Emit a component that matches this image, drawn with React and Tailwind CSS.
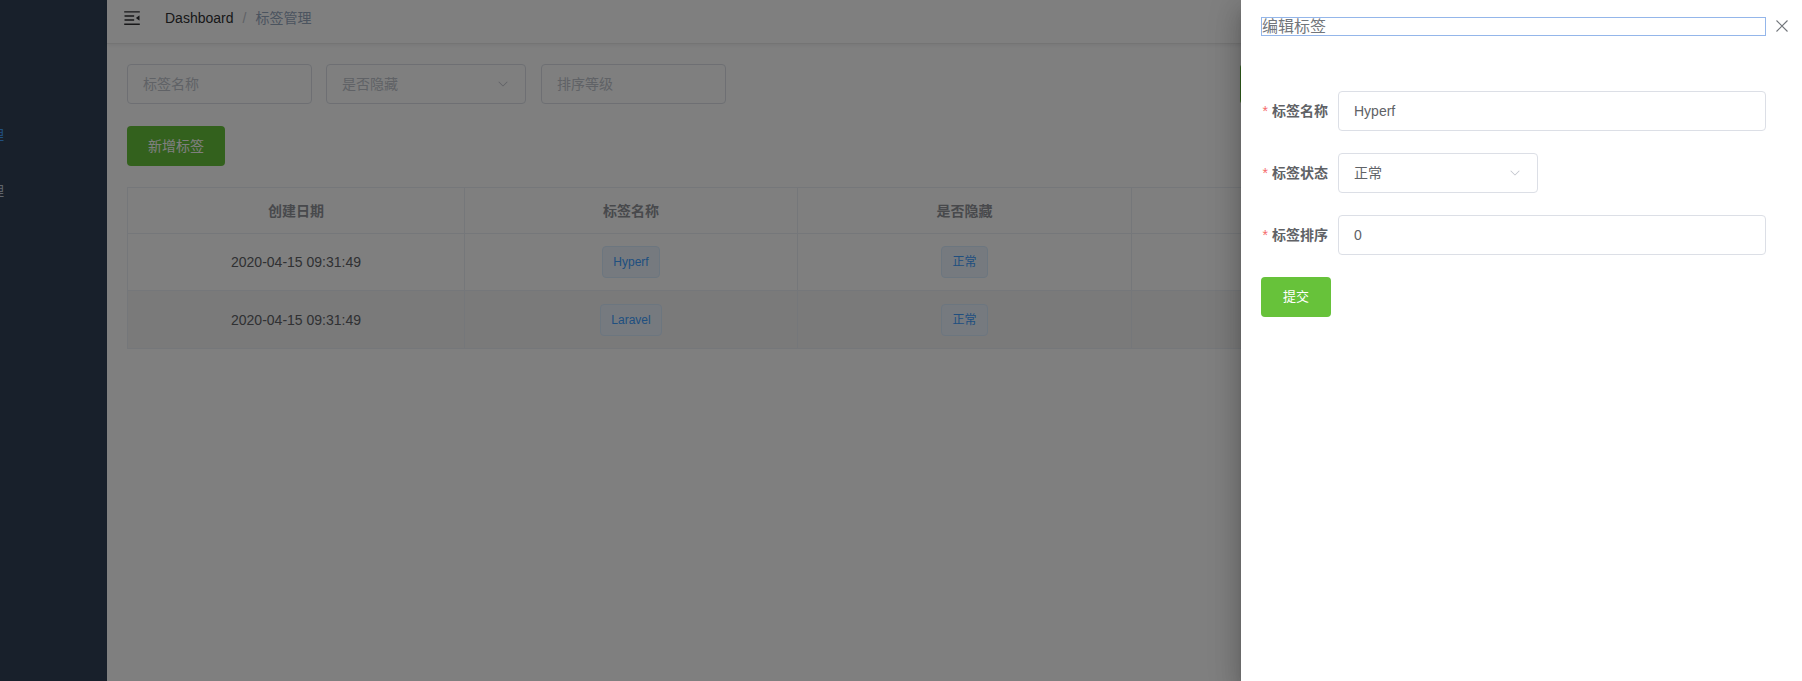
import React from 'react';

const font = { fontFamily: '"Liberation Sans", "Noto Sans CJK SC", sans-serif' };

const rows = [
  { date: '2020-04-15 09:31:49', name: 'Hyperf', status: '正常' },
  { date: '2020-04-15 09:31:49', name: 'Laravel', status: '正常' },
];

const Chevron = ({ className = '' }) => (
  <svg viewBox="0 0 1024 1024" className={className} fill="currentColor">
    <path d="M831.9 340.6a32 32 0 0 1 0 45.3L534.6 683.2a32 32 0 0 1-45.3 0L192.1 385.9a32 32 0 1 1 45.3-45.3L512 615.1l274.6-274.5a32 32 0 0 1 45.3 0z" />
  </svg>
);

const Hamburger = () => (
  <svg viewBox="0 0 1024 1024" className="w-5 h-5 rotate-180 text-[#303133]" fill="currentColor">
    <path d="M408 442h480c4.4 0 8-3.6 8-8v-56c0-4.4-3.6-8-8-8H408c-4.4 0-8 3.6-8 8v56c0 4.4 3.6 8 8 8zm-8 204c0 4.4 3.6 8 8 8h480c4.4 0 8-3.6 8-8v-56c0-4.4-3.6-8-8-8H408c-4.4 0-8 3.6-8 8v56zm504-486H120c-4.4 0-8 3.6-8 8v56c0 4.4 3.6 8 8 8h784c4.4 0 8-3.6 8-8v-56c0-4.4-3.6-8-8-8zm0 632H120c-4.4 0-8 3.6-8 8v56c0 4.4 3.6 8 8 8h784c4.4 0 8-3.6 8-8v-56c0-4.4-3.6-8-8-8zM142.4 642.1L298.7 519a8.84 8.84 0 0 0 0-13.9L142.4 381.9c-5.8-4.6-14.4-.5-14.4 6.9v246.3a8.9 8.9 0 0 0 14.4 7z" />
  </svg>
);

const Tag = ({ children }) => (
  <span className="inline-flex items-center h-8 px-[10px] rounded-[4px] border border-[#d9ecff] bg-[#ecf5ff] text-[#409eff] text-xs">
    {children}
  </span>
);

const FormRow = ({ label, children }) => (
  <div className="flex items-center h-10">
    <label className="w-[77px] shrink-0 pr-[10px] text-right text-sm font-bold text-[#606266]">
      <span className="text-[#f56c6c] mr-1 font-normal">*</span>
      {label}
    </label>
    {children}
  </div>
);

export default function App() {
  return (
    <div className="relative flex h-[681px] w-full overflow-hidden bg-white" style={font}>
      {/* Sidebar */}
      <aside className="w-[107px] shrink-0 bg-[#304156] overflow-hidden pt-[51px]">
        {['首页', '标签管理', '文章管理'].map((t, i) => (
          <div key={t} className="h-[56px] flex items-center">
            <span className={`-ml-[52px] text-sm whitespace-nowrap ${i === 1 ? 'text-[#409eff]' : 'text-[#bfcbd9]'}`}>{t}</span>
          </div>
        ))}
      </aside>

      {/* Main */}
      <main className="flex-1 min-w-0">
        <header className="h-[44px] pb-[8px] flex items-center border-b border-[#e8e8e8] shadow-[0_1px_4px_rgba(0,21,41,0.08)]">
          <div className="px-[15px] flex items-center">
            <Hamburger />
          </div>
          <nav className="ml-2 flex items-center text-sm">
            <span className="text-[#303133]">Dashboard</span>
            <span className="mx-[9px] text-[#c0c4cc]">/</span>
            <span className="text-[#97a8be]">标签管理</span>
          </nav>
        </header>

        <section className="px-5 pt-5">
          <div className="flex items-center">
            <div className="w-[185px] h-10 flex items-center px-[15px] border border-[#dcdfe6] rounded-[4px] text-sm text-[#c0c4cc]">标签名称</div>
            <div className="ml-[14px] w-[200px] h-10 flex items-center justify-between px-[15px] border border-[#dcdfe6] rounded-[4px] text-sm text-[#c0c4cc]">
              是否隐藏
              <Chevron className="w-[14px] h-[14px] text-[#c0c4cc]" />
            </div>
            <div className="ml-[15px] w-[185px] h-10 flex items-center px-[15px] border border-[#dcdfe6] rounded-[4px] text-sm text-[#c0c4cc]">排序等级</div>
            <button className="ml-[514px] h-10 px-5 rounded-[4px] bg-[#67c23a] text-white text-sm">搜索</button>
          </div>

          <button className="mt-[22px] w-[98px] h-10 rounded-[4px] bg-[#67c23a] text-white text-sm">新增标签</button>

          <div className="mt-[21px] border border-[#ebeef5] text-sm">
            <div className="grid grid-cols-[337px_333px_334px_334px_1fr] h-[46px] border-b border-[#ebeef5] font-bold text-[#909399]">
              {['创建日期', '标签名称', '是否隐藏', '排序等级', '操作'].map((h, i) => (
                <div key={h} className={`flex items-center justify-center ${i < 4 ? 'border-r border-[#ebeef5]' : ''}`}>{h}</div>
              ))}
            </div>
            {rows.map((r, idx) => (
              <div
                key={r.name}
                className={`grid grid-cols-[337px_333px_334px_334px_1fr] h-[57px] text-[#606266] ${idx === 0 ? 'border-b border-[#ebeef5]' : 'bg-[#f4f4f5]'}`}
              >
                <div className="flex items-center justify-center border-r border-[#ebeef5]">{r.date}</div>
                <div className="flex items-center justify-center border-r border-[#ebeef5]"><Tag>{r.name}</Tag></div>
                <div className="flex items-center justify-center border-r border-[#ebeef5]"><Tag>{r.status}</Tag></div>
                <div className="flex items-center justify-center border-r border-[#ebeef5]">0</div>
                <div />
              </div>
            ))}
          </div>
        </section>
      </main>

      {/* Modal overlay */}
      <div className="absolute inset-0 bg-[rgba(0,0,0,0.5)]" />

      {/* Drawer */}
      <div className="absolute right-0 top-0 h-full w-[561px] bg-white shadow-[0_8px_10px_-5px_rgba(0,0,0,0.2),0_16px_24px_2px_rgba(0,0,0,0.14),0_6px_30px_5px_rgba(0,0,0,0.12)]">
        <div className="flex items-center pt-[16px] pl-5 pr-[10px]">
          <span className="flex-1 h-[19px] leading-[17px] border border-[#94b6ea] text-base text-[#72767b]">编辑标签</span>
          <button className="ml-[6px] w-5 h-5 flex items-center justify-center text-[#72767b]">
            <svg viewBox="0 0 12 12" className="w-3 h-3" stroke="currentColor" strokeWidth="1.1" fill="none">
              <path d="M0.5 0.5L11.5 11.5M11.5 0.5L0.5 11.5" />
            </svg>
          </button>
        </div>

        <div className="pl-5 pr-[36px] pt-[55px] flex flex-col gap-[22px]">
          <FormRow label="标签名称">
            <div className="flex-1 h-10 flex items-center px-[15px] border border-[#dcdfe6] rounded-[4px] text-sm text-[#606266]">Hyperf</div>
          </FormRow>
          <FormRow label="标签状态">
            <div className="w-[200px] h-10 flex items-center justify-between px-[15px] border border-[#dcdfe6] rounded-[4px] text-sm text-[#606266]">
              正常
              <Chevron className="w-[14px] h-[14px] text-[#c0c4cc]" />
            </div>
          </FormRow>
          <FormRow label="标签排序">
            <div className="flex-1 h-10 flex items-center px-[15px] border border-[#dcdfe6] rounded-[4px] text-sm text-[#606266]">0</div>
          </FormRow>
          <div>
            <button className="w-[70px] h-10 rounded-[4px] bg-[#67c23a] text-white text-[13px]">提交</button>
          </div>
        </div>
      </div>
    </div>
  );
}
